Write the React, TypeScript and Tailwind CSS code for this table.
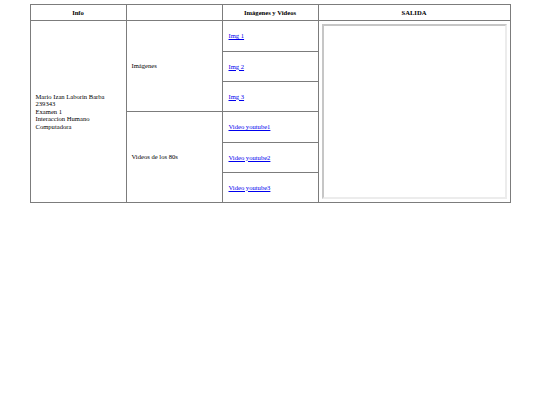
const cell = "border border-[#7c7c7c] align-middle";

const imagenes = ["Img 1", "Img 2", "Img 3"];
const videos = ["Video youtube1", "Video youtube2", "Video youtube3"];

const LinkCell = ({ label, h }: { label: string; h: string }) => (
  <td className={`${cell} ${h} pl-[6px]`}>
    <a href="#" className="text-[#0000ee] underline">
      {label}
    </a>
  </td>
);

export default function App() {
  return (
    <div className="min-h-[405px] bg-white pt-[4px] font-['Liberation_Serif',serif] text-[6.6px] leading-[7.4px] text-black">
      <table className="mx-auto w-[480px] table-fixed border-collapse">
        <colgroup>
          <col className="w-[96px]" />
          <col className="w-[96px]" />
          <col className="w-[96px]" />
          <col className="w-[192px]" />
        </colgroup>
        <thead>
          <tr className="h-[16px]">
            <th className={`${cell} font-bold`}>Info</th>
            <th className={cell}></th>
            <th className={`${cell} font-bold`}>Imágenes y Videos</th>
            <th className={`${cell} font-bold`}>SALIDA</th>
          </tr>
        </thead>
        <tbody>
          <tr>
            <td rowSpan={6} className={`${cell} pl-[5px]`}>
              Mario Izan Laborin Barba
              <br />
              239343
              <br />
              Examen 1
              <br />
              Interaccion Humano
              <br />
              Computadora
            </td>
            <td rowSpan={3} className={`${cell} pl-[5px]`}>
              Imágenes
            </td>
            <LinkCell label={imagenes[0]} h="h-[31px]" />
            <td rowSpan={6} className={`${cell} px-[3px] py-[3px]`}>
              <div className="h-[175px] w-[185px] border-2 border-t-[#c6c6c6] border-l-[#c6c6c6] border-b-[#ececec] border-r-[#ececec] bg-white" />
            </td>
          </tr>
          <tr>
            <LinkCell label={imagenes[1]} h="h-[30px]" />
          </tr>
          <tr>
            <LinkCell label={imagenes[2]} h="h-[30px]" />
          </tr>
          <tr>
            <td rowSpan={3} className={`${cell} pl-[5px]`}>
              Videos de los 80s
            </td>
            <LinkCell label={videos[0]} h="h-[31px]" />
          </tr>
          <tr>
            <LinkCell label={videos[1]} h="h-[30px]" />
          </tr>
          <tr>
            <LinkCell label={videos[2]} h="h-[30px]" />
          </tr>
        </tbody>
      </table>
    </div>
  );
}
